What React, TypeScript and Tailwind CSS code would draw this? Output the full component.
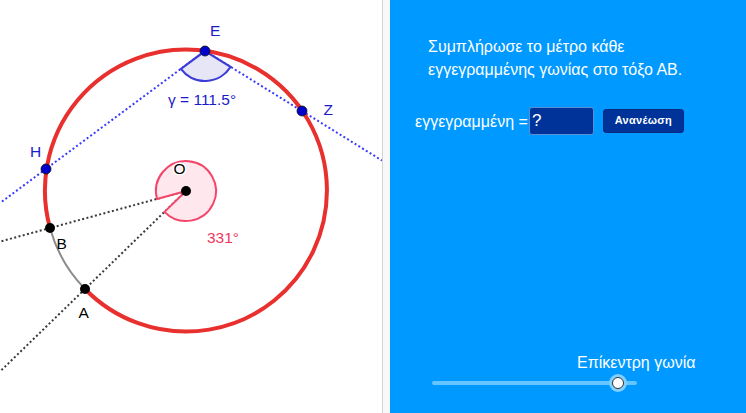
import React from 'react'

const BLUE = '#1a1acc'
const RED = '#e8302e'

const GeoCanvas: React.FC = () => {
  return (
    <svg width="382" height="413" viewBox="0 0 382 413" className="block">
      {/* dotted lines from E */}
      <line x1="205" y1="51" x2="382" y2="160.5" stroke="#3a3aff" strokeWidth="2" strokeDasharray="2 2.4" />
      <line x1="205" y1="51" x2="0" y2="203" stroke="#3a3aff" strokeWidth="2" strokeDasharray="2 2.4" />
      {/* dotted lines from O */}
      <line x1="186" y1="191" x2="0" y2="241.6" stroke="#3a3a3a" strokeWidth="2" strokeDasharray="2 2.4" />
      <line x1="186" y1="191" x2="0" y2="371.5" stroke="#3a3a3a" strokeWidth="2" strokeDasharray="2 2.4" />

      {/* central angle 331° */}
      <path
        d="M186 191 L157.05 198.9 A30 30 0 1 1 164.46 211.9 Z"
        fill="#ffe4ea"
        fillOpacity="0.85"
        stroke="#f4466a"
        strokeWidth="2"
      />

      {/* inscribed angle at E */}
      <path
        d="M205 51 L180.9 68.9 A30 30 0 0 0 230.5 66.8 Z"
        fill="#e6e6f7"
        stroke="#3c3cd6"
        strokeWidth="2.2"
      />

      {/* circle: major arc red, minor arc BA grey */}
      <path d="M85 289 A141 141 0 1 0 50 228" fill="none" stroke={RED} strokeWidth="4" />
      <path d="M50 228 A141 141 0 0 0 85 289" fill="none" stroke="#8c8c8c" strokeWidth="2" />

      {/* points */}
      <circle cx="205" cy="51" r="5" fill="#0000cc" stroke="#111" strokeWidth="0.8" />
      <circle cx="302" cy="111" r="5" fill="#0000cc" stroke="#111" strokeWidth="0.8" />
      <circle cx="46" cy="169" r="5" fill="#0000cc" stroke="#111" strokeWidth="0.8" />
      <circle cx="50" cy="228" r="5" fill="#000" />
      <circle cx="85" cy="289" r="5" fill="#000" />
      <circle cx="186" cy="191" r="5" fill="#000" />

      {/* labels */}
      <g style={{ fontFamily: '"Liberation Sans", Arial, sans-serif' }} fontSize="15.5">
        <text x="210" y="36" fill={BLUE}>E</text>
        <text x="323.5" y="114.5" fill={BLUE}>Z</text>
        <text x="30" y="157" fill={BLUE}>H</text>
        <text x="173.5" y="173.5" fill="#000" stroke="#fff" strokeWidth="3" paintOrder="stroke">O</text>
        <text x="56.5" y="248.5" fill="#000">B</text>
        <text x="78.5" y="317.5" fill="#000">A</text>
        <text x="168" y="105" fill={BLUE}>γ = 111.5°</text>
        <text x="207" y="243" fill="#f0365a">331°</text>
      </g>
    </svg>
  )
}

export default function App() {
  const font = { fontFamily: '"Liberation Sans", Arial, sans-serif' }
  return (
    <div className="flex w-[746px] h-[413px] overflow-hidden bg-white" style={font}>
      <div className="w-[382px] h-full shrink-0">
        <GeoCanvas />
      </div>
      <div className="w-[1px] h-full bg-[#d4d4d4] shrink-0" />
      <div className="w-[7px] h-full bg-[#f8f8f8] shrink-0" />

      <div className="flex-1 h-full bg-[#0099ff] text-white flex flex-col">
        <div className="pl-[38px] pt-[35px] text-[16px] leading-[23px]">
          <div>Συμπλήρωσε το μέτρο κάθε</div>
          <div>εγγεγραμμένης γωνίας στο τόξο ΑΒ.</div>
        </div>

        <div className="flex items-center pl-[25px] mt-[24px]">
          <span className="text-[16px] leading-[28px] pt-[3px]">εγγεγραμμένη =</span>
          <div className="ml-[1px] w-[65px] h-[28px] rounded-[3px] bg-[#003399] border border-[#5a8fd6] flex items-center pl-[2px] text-[17px]">
            ?
          </div>
          <button className="ml-[9px] w-[81px] h-[24px] rounded-[3px] bg-[#003399] border border-[#0a2a80] text-[11px] font-bold tracking-[0.3px]">
            Ανανέωση
          </button>
        </div>

        <div className="flex-1" />

        <div className="pl-[187px] text-[16px] leading-[18px]">Επίκεντρη γωνία</div>
        <div className="ml-[42px] mt-[2px] mb-[21px] w-[205px] h-[18px] relative flex items-center">
          <div className="w-full h-[4px] rounded-full bg-[#66c4ff]" />
          <div className="absolute left-[177px] top-0 w-[18px] h-[18px] rounded-full bg-[#7fcfff] flex items-center justify-center">
            <div className="w-[12px] h-[12px] rounded-full bg-white border border-[#333]" />
          </div>
        </div>
      </div>
    </div>
  )
}
